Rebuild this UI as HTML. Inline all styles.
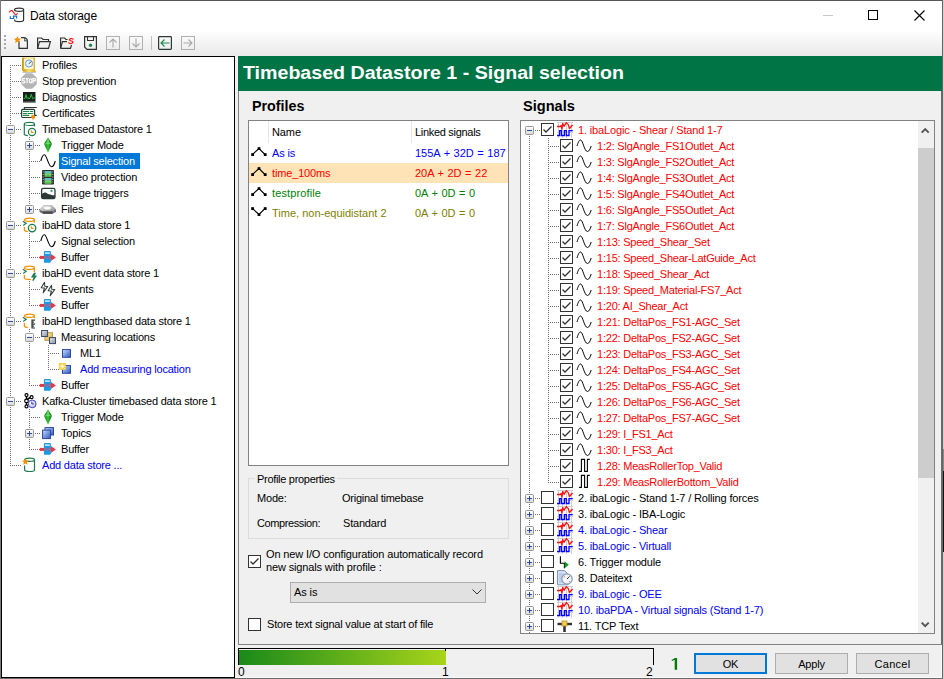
<!DOCTYPE html>
<html><head><meta charset="utf-8">
<style>
*{box-sizing:border-box;margin:0;padding:0}
html,body{width:944px;height:679px;overflow:hidden;background:#f0f0f0;font-family:"Liberation Sans",sans-serif;font-size:11px;color:#000;letter-spacing:-0.2px}
.a{position:absolute}
.t{position:absolute;white-space:nowrap;line-height:16px;height:16px}
svg{position:absolute;overflow:visible}
</style></head><body>
<svg width="0" height="0" style="position:absolute"><defs><linearGradient id="exg" x1="0" y1="0" x2="0" y2="1"><stop offset="0" stop-color="#ffffff"/><stop offset="1" stop-color="#d8d8d8"/></linearGradient></defs></svg>
<div class="a" style="left:0px;top:0px;width:944px;height:1px;background:#555"></div>
<div class="a" style="left:0px;top:0px;width:1px;height:679px;background:#7a7a7a"></div>
<div class="a" style="left:943px;top:0px;width:1px;height:679px;background:#d0d0d0"></div>
<div class="a" style="left:943px;top:449px;width:1px;height:22px;background:#888"></div>
<div class="a" style="left:943px;top:471px;width:1px;height:81px;background:#111"></div>
<div class="a" style="left:942px;top:0px;width:1px;height:679px;background:#666"></div>
<div class="a" style="left:0px;top:678px;width:942px;height:1px;background:#6a6a6a"></div>
<div class="a" style="left:236px;top:677px;width:706px;height:1px;background:#fafafa"></div>
<div class="a" style="left:941px;top:32px;width:1px;height:646px;background:#fafafa"></div>
<div class="a" style="left:1px;top:1px;width:941px;height:31px;background:#fff"></div>
<div class="t" style="left:30px;top:8px;color:#000;font-size:12px;letter-spacing:-0.15px;">Data storage</div>
<svg style="left:6px;top:5px" width="22" height="20" viewBox="0 0 22 20"><path d="M8.6 5.5 V4.8 C8.6 2.6,17.6 2.6,17.6 4.8 V15 C17.6 17.2,8.6 17.2,8.6 15 V14.6" fill="none" stroke="#333" stroke-width="1.2"/><path d="M8.6 4.8 C8.6 6.9,17.6 6.9,17.6 4.8" fill="none" stroke="#333" stroke-width="1.2"/><path d="M3.2 7.4 Q5.4 3.6,7.5 7.3 Q9.5 11.2,11.6 8.4" fill="none" stroke="#ff2020" stroke-width="1.2"/><path d="M4.3 11.2 V13.5 H7.6 V11.2 H10.6 V13.5" fill="none" stroke="#1a70d0" stroke-width="1.2"/></svg>
<div class="a" style="left:823px;top:15px;width:10px;height:1px;background:#c8c8c8"></div>
<svg style="left:868px;top:10px" width="10" height="10" viewBox="0 0 10 10"><rect x="0.5" y="0.5" width="9" height="9" fill="none" stroke="#000"/></svg>
<svg style="left:914px;top:10px" width="11" height="11" viewBox="0 0 11 11"><path d="M0.5 0.5L10.5 10.5M10.5 0.5L0.5 10.5" stroke="#000" stroke-width="1.1"/></svg>
<div class="a" style="left:1px;top:32px;width:941px;height:24px;background:linear-gradient(#fdfdfd,#e9e9e9)"></div>
<div class="a" style="left:4px;top:35px;width:2px;height:2px;background:#a8a8a8"></div>
<div class="a" style="left:4px;top:39px;width:2px;height:2px;background:#a8a8a8"></div>
<div class="a" style="left:4px;top:43px;width:2px;height:2px;background:#a8a8a8"></div>
<div class="a" style="left:4px;top:47px;width:2px;height:2px;background:#a8a8a8"></div>
<svg style="left:14px;top:36px" width="16" height="14" viewBox="0 0 16 14"><path d="M5 5 V12.4 H13.4 V5.5 C13.4 3,12 1.6,9.5 1.6 H7" fill="none" stroke="#333" stroke-width="1.2"/><path d="M9.8 1.6 C11 2.5,10.8 4.2,10.6 5 C11.5 4.6,13 4.8,13.4 5.5" fill="none" stroke="#333" stroke-width="1"/><path d="M3.4 0.2 L4.5 2.6 L7 2.8 L5.1 4.5 L5.7 7 L3.4 5.7 L1.1 7 L1.7 4.5 L-0.2 2.8 L2.3 2.6 Z" fill="#f39200"/></svg>
<svg style="left:37px;top:37px" width="14" height="12" viewBox="0 0 14 12"><path d="M0.6 11.4 V1 H4.5 L6 2.5 H11.5 V4.5" fill="none" stroke="#333" stroke-width="1.2"/><path d="M0.6 11.4 L2.5 4.6 H13.4 L11.5 11.4 Z" fill="none" stroke="#333" stroke-width="1.2"/></svg>
<svg style="left:60px;top:37px" width="14" height="12" viewBox="0 0 14 12"><path d="M0.6 11.4 V1 H4.5 L6 2.5 H7.5" fill="none" stroke="#333" stroke-width="1.2"/><path d="M0.6 11.4 L2.5 4.6 H7 M11.5 8 L10.5 11.4 H0.6" fill="none" stroke="#333" stroke-width="1.2"/><text x="8" y="7.3" font-family="Liberation Sans" font-weight="bold" font-style="italic" font-size="9" fill="#f00" letter-spacing="0">S</text></svg>
<svg style="left:84px;top:36px" width="13" height="14" viewBox="0 0 13 14"><path d="M0.6 0.6 H12.4 V13.4 H3 L0.6 11 Z" fill="none" stroke="#333" stroke-width="1.2"/><path d="M3.5 0.6 V4.5 H9.5 V0.6" fill="none" stroke="#333" stroke-width="1.1"/><circle cx="6.5" cy="9.2" r="1.7" fill="#1a8a4a"/></svg>
<svg style="left:106px;top:36px" width="14" height="14" viewBox="0 0 14 14"><rect x="0.5" y="0.5" width="13" height="13" fill="none" stroke="#b0b0b0"/><path d="M7 3 V11.5 M3.5 6.5 L7 3 L10.5 6.5" fill="none" stroke="#a8a8a8" stroke-width="1.1"/></svg>
<svg style="left:129px;top:36px" width="14" height="14" viewBox="0 0 14 14"><rect x="0.5" y="0.5" width="13" height="13" fill="none" stroke="#b0b0b0"/><path d="M7 2.5 V11 M3.5 7.5 L7 11 L10.5 7.5" fill="none" stroke="#a8a8a8" stroke-width="1.1"/></svg>
<div class="a" style="left:151px;top:36px;width:1px;height:14px;background:#c0c0c0"></div>
<svg style="left:158px;top:36px" width="14" height="14" viewBox="0 0 14 14"><rect x="0.6" y="0.6" width="12.8" height="12.8" rx="0.8" fill="none" stroke="#2b3a34" stroke-width="1.2"/><path d="M11.5 7 H3 M6.5 3.5 L3 7 L6.5 10.5" fill="none" stroke="#1a8a4a" stroke-width="1.15"/></svg>
<svg style="left:181px;top:36px" width="14" height="14" viewBox="0 0 14 14"><rect x="0.5" y="0.5" width="13" height="13" fill="none" stroke="#b0b0b0"/><path d="M2.5 7 H11 M7.5 3.5 L11 7 L7.5 10.5" fill="none" stroke="#a8a8a8" stroke-width="1.1"/></svg>
<div class="a" style="left:1px;top:56px;width:234px;height:622px;background:#fff;border:1px solid #000"></div>
<div class="a" style="left:10px;top:65px;width:1px;height:401px;background:repeating-linear-gradient(to bottom,#6e6e6e 0 1px,transparent 1px 2px)"></div>
<div class="a" style="left:29px;top:137px;width:1px;height:73px;background:repeating-linear-gradient(to bottom,#6e6e6e 0 1px,transparent 1px 2px)"></div>
<div class="a" style="left:29px;top:233px;width:1px;height:25px;background:repeating-linear-gradient(to bottom,#6e6e6e 0 1px,transparent 1px 2px)"></div>
<div class="a" style="left:29px;top:281px;width:1px;height:25px;background:repeating-linear-gradient(to bottom,#6e6e6e 0 1px,transparent 1px 2px)"></div>
<div class="a" style="left:29px;top:329px;width:1px;height:57px;background:repeating-linear-gradient(to bottom,#6e6e6e 0 1px,transparent 1px 2px)"></div>
<div class="a" style="left:48px;top:345px;width:1px;height:25px;background:repeating-linear-gradient(to bottom,#6e6e6e 0 1px,transparent 1px 2px)"></div>
<div class="a" style="left:29px;top:409px;width:1px;height:41px;background:repeating-linear-gradient(to bottom,#6e6e6e 0 1px,transparent 1px 2px)"></div>
<div class="a" style="left:10px;top:65px;width:11px;height:1px;background:repeating-linear-gradient(to right,#6e6e6e 0 1px,transparent 1px 2px)"></div>
<div class="a" style="left:10px;top:81px;width:11px;height:1px;background:repeating-linear-gradient(to right,#6e6e6e 0 1px,transparent 1px 2px)"></div>
<div class="a" style="left:10px;top:97px;width:11px;height:1px;background:repeating-linear-gradient(to right,#6e6e6e 0 1px,transparent 1px 2px)"></div>
<div class="a" style="left:10px;top:113px;width:11px;height:1px;background:repeating-linear-gradient(to right,#6e6e6e 0 1px,transparent 1px 2px)"></div>
<div class="a" style="left:10px;top:129px;width:11px;height:1px;background:repeating-linear-gradient(to right,#6e6e6e 0 1px,transparent 1px 2px)"></div>
<div class="a" style="left:29px;top:145px;width:11px;height:1px;background:repeating-linear-gradient(to right,#6e6e6e 0 1px,transparent 1px 2px)"></div>
<div class="a" style="left:29px;top:161px;width:11px;height:1px;background:repeating-linear-gradient(to right,#6e6e6e 0 1px,transparent 1px 2px)"></div>
<div class="a" style="left:29px;top:177px;width:11px;height:1px;background:repeating-linear-gradient(to right,#6e6e6e 0 1px,transparent 1px 2px)"></div>
<div class="a" style="left:29px;top:193px;width:11px;height:1px;background:repeating-linear-gradient(to right,#6e6e6e 0 1px,transparent 1px 2px)"></div>
<div class="a" style="left:29px;top:209px;width:11px;height:1px;background:repeating-linear-gradient(to right,#6e6e6e 0 1px,transparent 1px 2px)"></div>
<div class="a" style="left:10px;top:225px;width:11px;height:1px;background:repeating-linear-gradient(to right,#6e6e6e 0 1px,transparent 1px 2px)"></div>
<div class="a" style="left:29px;top:241px;width:11px;height:1px;background:repeating-linear-gradient(to right,#6e6e6e 0 1px,transparent 1px 2px)"></div>
<div class="a" style="left:29px;top:257px;width:11px;height:1px;background:repeating-linear-gradient(to right,#6e6e6e 0 1px,transparent 1px 2px)"></div>
<div class="a" style="left:10px;top:273px;width:11px;height:1px;background:repeating-linear-gradient(to right,#6e6e6e 0 1px,transparent 1px 2px)"></div>
<div class="a" style="left:29px;top:289px;width:11px;height:1px;background:repeating-linear-gradient(to right,#6e6e6e 0 1px,transparent 1px 2px)"></div>
<div class="a" style="left:29px;top:305px;width:11px;height:1px;background:repeating-linear-gradient(to right,#6e6e6e 0 1px,transparent 1px 2px)"></div>
<div class="a" style="left:10px;top:321px;width:11px;height:1px;background:repeating-linear-gradient(to right,#6e6e6e 0 1px,transparent 1px 2px)"></div>
<div class="a" style="left:29px;top:337px;width:11px;height:1px;background:repeating-linear-gradient(to right,#6e6e6e 0 1px,transparent 1px 2px)"></div>
<div class="a" style="left:48px;top:353px;width:11px;height:1px;background:repeating-linear-gradient(to right,#6e6e6e 0 1px,transparent 1px 2px)"></div>
<div class="a" style="left:48px;top:369px;width:11px;height:1px;background:repeating-linear-gradient(to right,#6e6e6e 0 1px,transparent 1px 2px)"></div>
<div class="a" style="left:29px;top:385px;width:11px;height:1px;background:repeating-linear-gradient(to right,#6e6e6e 0 1px,transparent 1px 2px)"></div>
<div class="a" style="left:10px;top:401px;width:11px;height:1px;background:repeating-linear-gradient(to right,#6e6e6e 0 1px,transparent 1px 2px)"></div>
<div class="a" style="left:29px;top:417px;width:11px;height:1px;background:repeating-linear-gradient(to right,#6e6e6e 0 1px,transparent 1px 2px)"></div>
<div class="a" style="left:29px;top:433px;width:11px;height:1px;background:repeating-linear-gradient(to right,#6e6e6e 0 1px,transparent 1px 2px)"></div>
<div class="a" style="left:29px;top:449px;width:11px;height:1px;background:repeating-linear-gradient(to right,#6e6e6e 0 1px,transparent 1px 2px)"></div>
<div class="a" style="left:10px;top:465px;width:11px;height:1px;background:repeating-linear-gradient(to right,#6e6e6e 0 1px,transparent 1px 2px)"></div>
<svg style="left:21px;top:57px" width="16" height="16" viewBox="0 0 16 16"><defs><linearGradient id="pg" x1="0" x2="1"><stop offset="0" stop-color="#c89a10"/><stop offset="0.5" stop-color="#f8e070"/><stop offset="1" stop-color="#d8a820"/></linearGradient></defs><path d="M1 0.5 H14 V13 L15 15 H2.5 L1 13 Z" fill="url(#pg)"/><rect x="3" y="1.5" width="9.5" height="10.5" fill="#fdf6d8"/><circle cx="8" cy="6.5" r="3.6" fill="#e6f2fc" stroke="#6f9ccc" stroke-width="1"/><path d="M8 6.8 L10.2 4.4" stroke="#2a3040" stroke-width="0.9"/><path d="M1.5 15.5 H15" stroke="#8a8a8a" stroke-width="1" opacity="0.5"/></svg>
<div class="t" style="left:42px;top:57px;color:#000;">Profiles</div>
<svg style="left:21px;top:73px" width="16" height="16" viewBox="0 0 16 16"><path d="M4.8 0.3 H11.2 L15.8 4.8 V11.2 L11.2 15.7 H4.8 L0.3 11.2 V4.8 Z" fill="#b5b5b5"/><g fill="none" stroke="#fff" stroke-width="1.15"><path d="M4 5.6 H2.2 Q1.3 5.6,1.3 6.6 Q1.3 7.6,2.6 7.7 Q4 7.8,4 8.8 Q4 9.9,3 9.9 H1.2"/><path d="M4.6 5.6 H7.6 M6.1 5.6 V10.2"/><ellipse cx="9.6" cy="7.8" rx="1.3" ry="2.1"/><path d="M11.9 10.2 V5.6 H13.6 Q14.7 5.6,14.7 6.7 Q14.7 7.9,13.6 7.9 H11.9"/></g></svg>
<div class="t" style="left:42px;top:73px;color:#000;">Stop prevention</div>
<svg style="left:21px;top:89px" width="16" height="16" viewBox="0 0 16 16"><rect x="2" y="3" width="12.5" height="10.5" fill="#15201a"/><rect x="2" y="12.5" width="13" height="1.5" fill="#8a8a8a" opacity="0.8"/><rect x="14" y="3.5" width="1" height="10" fill="#9a9a9a" opacity="0.8"/><path d="M2.5 9.5 H4 L5 5.5 L6 9.5 L7 8.5 L8 10 L9 9 L10.3 5 L11.5 9.8 L12.5 9 H14.5" fill="none" stroke="#28b838" stroke-width="1"/></svg>
<div class="t" style="left:42px;top:89px;color:#000;">Diagnostics</div>
<svg style="left:21px;top:105px" width="16" height="16" viewBox="0 0 16 16"><path d="M3.4 4.4 V2.5 H15.7 M13.6 10.4 H15.7" fill="none" stroke="#2b3a34" stroke-width="1.1"/><rect x="0.6" y="4.4" width="13" height="8.1" rx="1.2" fill="#fff" stroke="#2b3a34" stroke-width="1.2"/><path d="M2.3 6.5H7.8M9.3 6.5H11.9M2.3 8.5H5.9M7.3 8.5H11.9M2.3 10.4H7.8" stroke="#1a8a4a" stroke-width="1.1" stroke-linecap="round"/><circle cx="12" cy="11.8" r="2" fill="#f39200"/><path d="M11 12.5 L12 15.5 L13 12.5 Z" fill="#f39200"/></svg>
<div class="t" style="left:42px;top:105px;color:#000;">Certificates</div>
<svg style="left:6px;top:125px" width="9" height="9" viewBox="0 0 9 9"><rect x="0.5" y="0.5" width="8" height="8" rx="1" fill="url(#exg)" stroke="#979797"/><path d="M2 4.5H7" stroke="#2a4a9a" stroke-width="1"/></svg>
<svg style="left:21px;top:121px" width="16" height="16" viewBox="0 0 16 16"><ellipse cx="8.4" cy="2.9" rx="5.1" ry="1.6" fill="none" stroke="#1e7a4e" stroke-width="1.2"/><path d="M13.5 2.9 V5.6 M3.3 2.9 V13.3 C3.6 14.2,5 14.6,6.8 14.7" fill="none" stroke="#1e7a4e" stroke-width="1.2"/><circle cx="11" cy="11" r="3.6" fill="#fff" stroke="#1e7a4e" stroke-width="1.2"/><path d="M10.4 9.3 V11.4 H12.5" fill="none" stroke="#f39200" stroke-width="1.1"/></svg>
<div class="t" style="left:42px;top:121px;color:#000;">Timebased Datastore 1</div>
<svg style="left:25px;top:141px" width="9" height="9" viewBox="0 0 9 9"><rect x="0.5" y="0.5" width="8" height="8" rx="1" fill="url(#exg)" stroke="#979797"/><path d="M2 4.5H7" stroke="#2a4a9a" stroke-width="1"/><path d="M4.5 2V7" stroke="#2a4a9a" stroke-width="1"/></svg>
<svg style="left:40px;top:137px" width="16" height="16" viewBox="0 0 16 16"><defs><linearGradient id="dg" x1="0" x2="1"><stop offset="0" stop-color="#0a7a0a"/><stop offset="0.5" stop-color="#38c838"/><stop offset="1" stop-color="#005a00"/></linearGradient></defs><path d="M8 0.3 L12 6.8 L8 15.7 L4 6.8 Z" fill="url(#dg)"/><path d="M8 1 L10 6.8 L6 6.8 Z" fill="#7ee07e" opacity="0.6"/><path d="M4 6.8 L12 6.8" stroke="#b0f0b0" stroke-width="0.5"/></svg>
<div class="t" style="left:61px;top:137px;color:#000;">Trigger Mode</div>
<svg style="left:40px;top:153px" width="16" height="16" viewBox="0 0 16 16"><path d="M0.8 8 C1.8 4,3 1.8,4.4 1.8 C6.8 1.8,8.4 13.8,11.6 13.8 C13 13.8,14.3 11.5,15.3 8" fill="none" stroke="#000" stroke-width="1.1"/></svg>
<div class="a" style="left:58px;top:153px;width:0px;height:16px;"></div>
<div class="t" style="left:59px;top:153px;color:#fff;background:#0078d7;padding:0 5px 0 2px">Signal selection</div>
<svg style="left:40px;top:169px" width="16" height="16" viewBox="0 0 16 16"><defs><linearGradient id="fg" x1="0" y1="0" x2="0" y2="1"><stop offset="0" stop-color="#5ab8e0"/><stop offset="0.6" stop-color="#6ed060"/><stop offset="1" stop-color="#4aa040"/></linearGradient></defs><rect x="2" y="1" width="12" height="14.5" rx="0.8" fill="#2e2e2e"/><rect x="4.5" y="2" width="7" height="6" fill="url(#fg)"/><rect x="4.5" y="9" width="7" height="6" fill="url(#fg)"/><path d="M3.2 2.5V15M12.8 2.5V15" stroke="#d8d8d8" stroke-width="0.9" stroke-dasharray="1 1.5"/></svg>
<div class="t" style="left:61px;top:169px;color:#000;">Video protection</div>
<svg style="left:40px;top:185px" width="16" height="16" viewBox="0 0 16 16"><rect x="1.6" y="3.3" width="13.4" height="10.2" rx="1.6" fill="#fff" stroke="#2b3a34" stroke-width="1.3"/><path d="M1.5 10 C3 7.5,5 7,6.5 8 C8 9,10 9.5,11.5 10 C13 10.5,14 10,15 10.5 V13.5 H1.5 Z" fill="#2b3a34"/><rect x="10.5" y="4.8" width="2" height="2" fill="#2a9a6a"/></svg>
<div class="t" style="left:61px;top:185px;color:#000;">Image triggers</div>
<svg style="left:25px;top:205px" width="9" height="9" viewBox="0 0 9 9"><rect x="0.5" y="0.5" width="8" height="8" rx="1" fill="url(#exg)" stroke="#979797"/><path d="M2 4.5H7" stroke="#2a4a9a" stroke-width="1"/><path d="M4.5 2V7" stroke="#2a4a9a" stroke-width="1"/></svg>
<svg style="left:40px;top:201px" width="16" height="16" viewBox="0 0 16 16"><defs><linearGradient id="dk" x1="0" y1="0" x2="1" y2="1"><stop offset="0" stop-color="#f0f0f0"/><stop offset="1" stop-color="#8a8a8a"/></linearGradient></defs><path d="M-0.5 9 L3.5 4.5 H12 L16 8.5 V11 L12.5 12.8 H3 L-0.5 11 Z" fill="#6a6a6a"/><path d="M-0.5 9 L3.5 4.5 H12 L16 8.5 L12.5 10.3 H3 Z" fill="url(#dk)"/><ellipse cx="7.5" cy="7" rx="3.4" ry="1.5" fill="#fafafa"/><path d="M3 10.5 H12.5 V12.8 H3 Z" fill="#4a4a4a"/><circle cx="13.8" cy="10.6" r="0.9" fill="#8080e0"/></svg>
<div class="t" style="left:61px;top:201px;color:#000;">Files</div>
<svg style="left:6px;top:221px" width="9" height="9" viewBox="0 0 9 9"><rect x="0.5" y="0.5" width="8" height="8" rx="1" fill="url(#exg)" stroke="#979797"/><path d="M2 4.5H7" stroke="#2a4a9a" stroke-width="1"/></svg>
<svg style="left:21px;top:217px" width="16" height="16" viewBox="0 0 16 16"><ellipse cx="8.4" cy="2.8" rx="5" ry="1.6" fill="none" stroke="#f39200" stroke-width="1.3"/><path d="M1.9 4.3 L5.1 6.4 L2.2 8.6" fill="none" stroke="#1e7a4e" stroke-width="1.2"/><path d="M13.3 2.8 V5.8 M3.4 9.9 V13.3 C3.8 14.2,5 14.5,6.8 14.6" fill="none" stroke="#f39200" stroke-width="1.3"/><circle cx="11.1" cy="11.1" r="3.7" fill="#fff" stroke="#1e7a4e" stroke-width="1.3"/><path d="M10.4 9.2 V11.4 H12.5" fill="none" stroke="#f39200" stroke-width="1.1"/></svg>
<div class="t" style="left:42px;top:217px;color:#000;">ibaHD data store 1</div>
<svg style="left:40px;top:233px" width="16" height="16" viewBox="0 0 16 16"><path d="M0.8 8 C1.8 4,3 1.8,4.4 1.8 C6.8 1.8,8.4 13.8,11.6 13.8 C13 13.8,14.3 11.5,15.3 8" fill="none" stroke="#000" stroke-width="1.1"/></svg>
<div class="t" style="left:61px;top:233px;color:#000;">Signal selection</div>
<svg style="left:40px;top:249px" width="16" height="16" viewBox="0 0 16 16"><rect x="-0.2" y="6.9" width="12" height="3" fill="#ee3344"/><path d="M10.9 4.9 L15.9 8.4 L10.9 11.9 Z" fill="#ee3344"/><rect x="3.9" y="1.9" width="7" height="11.8" rx="1.3" fill="#1a98e0"/><rect x="5" y="3.4" width="4.8" height="1.4" fill="#e8f0f4"/><rect x="3.9" y="7.1" width="7" height="2.6" fill="#7878a8"/></svg>
<div class="t" style="left:61px;top:249px;color:#000;">Buffer</div>
<svg style="left:6px;top:269px" width="9" height="9" viewBox="0 0 9 9"><rect x="0.5" y="0.5" width="8" height="8" rx="1" fill="url(#exg)" stroke="#979797"/><path d="M2 4.5H7" stroke="#2a4a9a" stroke-width="1"/></svg>
<svg style="left:21px;top:265px" width="16" height="16" viewBox="0 0 16 16"><ellipse cx="8.4" cy="2.8" rx="5" ry="1.6" fill="none" stroke="#f39200" stroke-width="1.3"/><path d="M1.9 4.3 L5.1 6.4 L2.2 8.6" fill="none" stroke="#1e7a4e" stroke-width="1.2"/><path d="M13.3 2.8 V7.3 M3.4 9.9 V13.3 C3.8 14.2,5.5 14.6,10 14.6" fill="none" stroke="#f39200" stroke-width="1.3"/><path d="M13.3 8.3 L10.8 12 H13.5 L12 15.3 L15.2 11 H12.8 L14.2 8.3 Z" fill="#fff" stroke="#1e7a4e" stroke-width="1.2" stroke-linejoin="round"/></svg>
<div class="t" style="left:42px;top:265px;color:#000;">ibaHD event data store 1</div>
<svg style="left:40px;top:281px" width="16" height="16" viewBox="0 0 16 16"><path d="M4.5 1.2 L1.2 6.8 L4.4 7 L3.2 11.8 L7.8 5.4 L4.8 5.3 Z" fill="#fff" stroke="#2b3a34" stroke-width="1.05" stroke-linejoin="round"/><path d="M11.5 4.2 L8.2 9.8 L11.4 10 L10.2 14.8 L14.8 8.4 L11.8 8.3 Z" fill="#fff" stroke="#2b3a34" stroke-width="1.05" stroke-linejoin="round"/></svg>
<div class="t" style="left:61px;top:281px;color:#000;">Events</div>
<svg style="left:40px;top:297px" width="16" height="16" viewBox="0 0 16 16"><rect x="-0.2" y="6.9" width="12" height="3" fill="#ee3344"/><path d="M10.9 4.9 L15.9 8.4 L10.9 11.9 Z" fill="#ee3344"/><rect x="3.9" y="1.9" width="7" height="11.8" rx="1.3" fill="#1a98e0"/><rect x="5" y="3.4" width="4.8" height="1.4" fill="#e8f0f4"/><rect x="3.9" y="7.1" width="7" height="2.6" fill="#7878a8"/></svg>
<div class="t" style="left:61px;top:297px;color:#000;">Buffer</div>
<svg style="left:6px;top:317px" width="9" height="9" viewBox="0 0 9 9"><rect x="0.5" y="0.5" width="8" height="8" rx="1" fill="url(#exg)" stroke="#979797"/><path d="M2 4.5H7" stroke="#2a4a9a" stroke-width="1"/></svg>
<svg style="left:21px;top:313px" width="16" height="16" viewBox="0 0 16 16"><ellipse cx="8.4" cy="2.8" rx="5" ry="1.6" fill="none" stroke="#f39200" stroke-width="1.3"/><path d="M1.9 4.3 L5.1 6.4 L2.2 8.6" fill="none" stroke="#1e7a4e" stroke-width="1.2"/><path d="M13.3 2.8 V5 M3.4 9.9 V13.3 C3.8 14.2,5 14.5,6.8 14.6" fill="none" stroke="#f39200" stroke-width="1.3"/><path d="M11 6.5 V15.5 M11 7.2 H14 M11 9.2 H13 M11 11.2 H14 M11 13.2 H13 M11 15 H14" fill="none" stroke="#2b3a34" stroke-width="1.2"/></svg>
<div class="t" style="left:42px;top:313px;color:#000;">ibaHD lengthbased data store 1</div>
<svg style="left:25px;top:333px" width="9" height="9" viewBox="0 0 9 9"><rect x="0.5" y="0.5" width="8" height="8" rx="1" fill="url(#exg)" stroke="#979797"/><path d="M2 4.5H7" stroke="#2a4a9a" stroke-width="1"/></svg>
<svg style="left:40px;top:329px" width="16" height="16" viewBox="0 0 16 16"><defs><linearGradient id="gg" x1="0" y1="0" x2="1" y2="1"><stop offset="0" stop-color="#e8eaf0"/><stop offset="1" stop-color="#8a909c"/></linearGradient><linearGradient id="yg" x1="0" y1="0" x2="1" y2="1"><stop offset="0" stop-color="#fff0b0"/><stop offset="1" stop-color="#e0a830"/></linearGradient></defs><rect x="4.9" y="3.7" width="7.5" height="7.6" fill="url(#yg)" stroke="#b89040" stroke-width="0.9"/><rect x="1.6" y="1.5" width="6" height="6" fill="url(#gg)" stroke="#3a4a6a" stroke-width="1"/><rect x="9.5" y="8.6" width="6" height="6" fill="url(#gg)" stroke="#3a4a6a" stroke-width="1"/></svg>
<div class="t" style="left:61px;top:329px;color:#000;">Measuring locations</div>
<svg style="left:59px;top:345px" width="16" height="16" viewBox="0 0 16 16"><defs><linearGradient id="mg" x1="0" y1="0" x2="1" y2="1"><stop offset="0" stop-color="#d0e0fc"/><stop offset="1" stop-color="#2a58c0"/></linearGradient></defs><rect x="3.5" y="4.6" width="8" height="7.7" fill="url(#mg)" stroke="#2a48a0" stroke-width="1"/></svg>
<div class="t" style="left:80px;top:345px;color:#000;">ML1</div>
<svg style="left:59px;top:361px" width="16" height="16" viewBox="0 0 16 16"><rect x="3.5" y="4.6" width="8" height="7.7" fill="url(#mg)" stroke="#2a48a0" stroke-width="1"/><rect x="-0.2" y="2" width="7" height="6.7" fill="#f6c838"/><path d="M0.5 2.7 L6 8 M6 2.7 L0.5 8 M3.3 2 V8.7 M-0.2 5.3 H6.8" stroke="#fff4b0" stroke-width="0.8"/><circle cx="3.3" cy="5.3" r="1.2" fill="#fffbe0"/></svg>
<div class="t" style="left:80px;top:361px;color:#0000ff;">Add measuring location</div>
<svg style="left:40px;top:377px" width="16" height="16" viewBox="0 0 16 16"><rect x="-0.2" y="6.9" width="12" height="3" fill="#ee3344"/><path d="M10.9 4.9 L15.9 8.4 L10.9 11.9 Z" fill="#ee3344"/><rect x="3.9" y="1.9" width="7" height="11.8" rx="1.3" fill="#1a98e0"/><rect x="5" y="3.4" width="4.8" height="1.4" fill="#e8f0f4"/><rect x="3.9" y="7.1" width="7" height="2.6" fill="#7878a8"/></svg>
<div class="t" style="left:61px;top:377px;color:#000;">Buffer</div>
<svg style="left:6px;top:397px" width="9" height="9" viewBox="0 0 9 9"><rect x="0.5" y="0.5" width="8" height="8" rx="1" fill="url(#exg)" stroke="#979797"/><path d="M2 4.5H7" stroke="#2a4a9a" stroke-width="1"/></svg>
<svg style="left:21px;top:393px" width="16" height="16" viewBox="0 0 16 16"><defs><radialGradient id="kg" cx="0.35" cy="0.35" r="0.8"><stop offset="0" stop-color="#ffffff"/><stop offset="1" stop-color="#aab0e8"/></radialGradient></defs><path d="M5.5 2.1 V13.4 M5.5 7.9 C6.5 6,8 4.5,10.6 4.2" fill="none" stroke="#000" stroke-width="1.4"/><circle cx="5.5" cy="2.1" r="1.5" fill="#fff" stroke="#000" stroke-width="1.2"/><circle cx="5.5" cy="7.9" r="1.8" fill="#fff" stroke="#000" stroke-width="1.2"/><circle cx="5.5" cy="13.4" r="1.5" fill="#fff" stroke="#000" stroke-width="1.2"/><circle cx="10.6" cy="4.2" r="1.5" fill="#fff" stroke="#000" stroke-width="1.2"/><circle cx="11.2" cy="10.9" r="3.9" fill="url(#kg)" stroke="#4848b8" stroke-width="1"/><path d="M10.8 8.6 V10.9 H12.8" fill="none" stroke="#303090" stroke-width="1"/></svg>
<div class="t" style="left:42px;top:393px;color:#000;">Kafka-Cluster timebased data store 1</div>
<svg style="left:40px;top:409px" width="16" height="16" viewBox="0 0 16 16"><defs><linearGradient id="dg" x1="0" x2="1"><stop offset="0" stop-color="#0a7a0a"/><stop offset="0.5" stop-color="#38c838"/><stop offset="1" stop-color="#005a00"/></linearGradient></defs><path d="M8 0.3 L12 6.8 L8 15.7 L4 6.8 Z" fill="url(#dg)"/><path d="M8 1 L10 6.8 L6 6.8 Z" fill="#7ee07e" opacity="0.6"/><path d="M4 6.8 L12 6.8" stroke="#b0f0b0" stroke-width="0.5"/></svg>
<div class="t" style="left:61px;top:409px;color:#000;">Trigger Mode</div>
<svg style="left:25px;top:429px" width="9" height="9" viewBox="0 0 9 9"><rect x="0.5" y="0.5" width="8" height="8" rx="1" fill="url(#exg)" stroke="#979797"/><path d="M2 4.5H7" stroke="#2a4a9a" stroke-width="1"/><path d="M4.5 2V7" stroke="#2a4a9a" stroke-width="1"/></svg>
<svg style="left:40px;top:425px" width="16" height="16" viewBox="0 0 16 16"><defs><linearGradient id="tg" x1="0" y1="0" x2="1" y2="1"><stop offset="0" stop-color="#c8dcfc"/><stop offset="1" stop-color="#2a58c0"/></linearGradient></defs><rect x="5" y="2.6" width="8.5" height="7.4" fill="url(#tg)" stroke="#2a48a0" stroke-width="1"/><rect x="2.6" y="5.1" width="7.8" height="8.5" fill="url(#tg)" stroke="#2a48a0" stroke-width="1"/></svg>
<div class="t" style="left:61px;top:425px;color:#000;">Topics</div>
<svg style="left:40px;top:441px" width="16" height="16" viewBox="0 0 16 16"><rect x="-0.2" y="6.9" width="12" height="3" fill="#ee3344"/><path d="M10.9 4.9 L15.9 8.4 L10.9 11.9 Z" fill="#ee3344"/><rect x="3.9" y="1.9" width="7" height="11.8" rx="1.3" fill="#1a98e0"/><rect x="5" y="3.4" width="4.8" height="1.4" fill="#e8f0f4"/><rect x="3.9" y="7.1" width="7" height="2.6" fill="#7878a8"/></svg>
<div class="t" style="left:61px;top:441px;color:#000;">Buffer</div>
<svg style="left:21px;top:457px" width="16" height="16" viewBox="0 0 16 16"><ellipse cx="8.6" cy="2.7" rx="4.9" ry="1.6" fill="none" stroke="#1e7a4e" stroke-width="1.2"/><path d="M13.5 2.7 V13 C13.5 15,3.6 15,3.6 13 V8.5" fill="none" stroke="#1e7a4e" stroke-width="1.2"/><path d="M4.40 1.10 L5.34 3.51 L7.92 3.66 L5.92 5.29 L6.57 7.79 L4.40 6.40 L2.23 7.79 L2.88 5.29 L0.88 3.66 L3.46 3.51 Z" fill="#f39200"/></svg>
<div class="t" style="left:42px;top:457px;color:#0000ff;">Add data store ...</div>
<div class="a" style="left:238px;top:56px;width:704px;height:35px;background:#007445"></div>
<div class="t" style="left:243px;top:62px;height:22px;line-height:22px;font-size:18px;font-weight:bold;color:#fff;letter-spacing:0;transform:scaleX(1.089);transform-origin:0 0">Timebased Datastore 1 - Signal selection</div>
<div class="a" style="left:238px;top:91px;width:704px;height:554px;border-left:1px solid #828282;border-bottom:1px solid #828282;border-right:1px solid #6a6a6a"></div>
<div class="t" style="left:252px;top:97px;color:#000;font-size:14.3px;letter-spacing:0px;font-weight:bold;height:18px;line-height:18px;">Profiles</div>
<div class="t" style="left:523px;top:97px;color:#000;font-size:14.6px;letter-spacing:0px;font-weight:bold;height:18px;line-height:18px;">Signals</div>
<div class="a" style="left:248px;top:120px;width:261px;height:346px;background:#fff;border:1px solid #828282"></div>
<div class="a" style="left:268px;top:121px;width:1px;height:22px;background:#e5e5e5"></div>
<div class="a" style="left:411px;top:121px;width:1px;height:22px;background:#e5e5e5"></div>
<div class="t" style="left:272px;top:124px;color:#000;letter-spacing:-0.1px;">Name</div>
<div class="t" style="left:415px;top:124px;color:#000;letter-spacing:-0.3px;">Linked signals</div>
<svg style="left:251px;top:147px" width="16" height="10" viewBox="0 0 16 10"><path d="M1.5 7.5 L8 1.5 L14 7.5" fill="none" stroke="#000" stroke-width="1.1"/><rect x="0.2" y="6.2" width="2.8" height="2.8" fill="#000"/><rect x="6.6" y="0.2" width="2.8" height="2.8" fill="#000"/><rect x="12.8" y="6.2" width="2.8" height="2.8" fill="#000"/></svg>
<div class="t" style="left:272px;top:145px;color:#0000ff;letter-spacing:-0.15px;">As is</div>
<div class="t" style="left:415px;top:145px;color:#0000ff;letter-spacing:0px;word-spacing:0.5px;">155A + 32D = 187</div>
<div class="a" style="left:249px;top:163px;width:259px;height:20px;background:#fde3b5"></div>
<svg style="left:251px;top:167px" width="16" height="10" viewBox="0 0 16 10"><path d="M1.5 7.5 L8 1.5 L14 7.5" fill="none" stroke="#000" stroke-width="1.1"/><rect x="0.2" y="6.2" width="2.8" height="2.8" fill="#000"/><rect x="6.6" y="0.2" width="2.8" height="2.8" fill="#000"/><rect x="12.8" y="6.2" width="2.8" height="2.8" fill="#000"/></svg>
<div class="t" style="left:272px;top:165px;color:#ff0000;letter-spacing:-0.15px;">time_100ms</div>
<div class="t" style="left:415px;top:165px;color:#ff0000;letter-spacing:0px;word-spacing:0.5px;">20A + 2D = 22</div>
<svg style="left:251px;top:187px" width="16" height="10" viewBox="0 0 16 10"><path d="M1.5 7.5 L8 1.5 L14 7.5" fill="none" stroke="#000" stroke-width="1.1"/><rect x="0.2" y="6.2" width="2.8" height="2.8" fill="#000"/><rect x="6.6" y="0.2" width="2.8" height="2.8" fill="#000"/><rect x="12.8" y="6.2" width="2.8" height="2.8" fill="#000"/></svg>
<div class="t" style="left:272px;top:185px;color:#008000;letter-spacing:0.12px;">testprofile</div>
<div class="t" style="left:415px;top:185px;color:#008000;letter-spacing:0px;word-spacing:0.5px;">0A + 0D = 0</div>
<svg style="left:251px;top:207px" width="16" height="10" viewBox="0 0 16 10"><path d="M1.5 1.5 L8 7.5 L14 1.5" fill="none" stroke="#000" stroke-width="1.1"/><rect x="0.2" y="0.2" width="2.8" height="2.8" fill="#000"/><rect x="6.6" y="6.2" width="2.8" height="2.8" fill="#000"/><rect x="12.8" y="0.2" width="2.8" height="2.8" fill="#000"/></svg>
<div class="t" style="left:272px;top:205px;color:#808000;letter-spacing:0.0px;">Time, non-equidistant 2</div>
<div class="t" style="left:415px;top:205px;color:#808000;letter-spacing:0px;word-spacing:0.5px;">0A + 0D = 0</div>
<div class="a" style="left:248px;top:478px;width:261px;height:61px;border:1px solid #dcdcdc"></div>
<div class="t" style="left:255px;top:471px;padding:0 2px;background:#f0f0f0;letter-spacing:-0.3px">Profile properties</div>
<div class="t" style="left:257px;top:490px;color:#000;">Mode:</div>
<div class="t" style="left:342px;top:490px;color:#000;letter-spacing:-0.25px;">Original timebase</div>
<div class="t" style="left:257px;top:515px;color:#000;letter-spacing:-0.4px;">Compression:</div>
<div class="t" style="left:343px;top:515px;color:#000;">Standard</div>
<svg style="left:248px;top:555px" width="13" height="13" viewBox="0 0 13 13"><rect x="0.5" y="0.5" width="12" height="12" fill="#fff" stroke="#333"/><path d="M2.5 6.5 L5 9 L10.5 3.5" fill="none" stroke="#333" stroke-width="1.3"/></svg>
<div class="a" style="left:266px;top:548px;line-height:13px;white-space:nowrap;letter-spacing:-0.14px">On new I/O configuration automatically record<br>new signals with profile :</div>
<div class="a" style="left:290px;top:582px;width:196px;height:21px;background:#e1e1e1;border:1px solid #adadad"></div>
<div class="t" style="left:294px;top:584px;color:#000;letter-spacing:-0.1px;">As is</div>
<svg style="left:472px;top:589px" width="10" height="6" viewBox="0 0 10 6"><path d="M0.5 0.5 L5 5 L9.5 0.5" fill="none" stroke="#333" stroke-width="1"/></svg>
<svg style="left:248px;top:618px" width="13" height="13" viewBox="0 0 13 13"><rect x="0.5" y="0.5" width="12" height="12" fill="#fff" stroke="#333"/></svg>
<div class="t" style="left:267px;top:616px;color:#000;letter-spacing:-0.2px;">Store text signal value at start of file</div>
<div class="a" style="left:520px;top:120px;width:415px;height:514px;background:#fff;border:1px solid #828282"></div>
<div class="a" style="left:918px;top:121px;width:16px;height:512px;background:#f0f0f0"></div>
<div class="a" style="left:918px;top:148px;width:16px;height:330px;background:#cdcdcd"></div>
<svg style="left:920px;top:127px" width="10" height="7" viewBox="0 0 10 7"><path d="M1.7 5.6 L5.2 2 L8.7 5.6" fill="none" stroke="#555" stroke-width="1.9"/></svg>
<svg style="left:920px;top:621px" width="10" height="7" viewBox="0 0 10 7"><path d="M1.7 1.6 L5.2 5.2 L8.7 1.6" fill="none" stroke="#555" stroke-width="1.9"/></svg>
<div class="a" style="left:0;top:0;width:944px;height:679px;clip-path:inset(121px 26px 46px 521px)">
<div class="a" style="left:529px;top:130px;width:1px;height:510px;background:repeating-linear-gradient(to bottom,#6e6e6e 0 1px,transparent 1px 2px)"></div>
<div class="a" style="left:548px;top:138px;width:1px;height:345px;background:repeating-linear-gradient(to bottom,#6e6e6e 0 1px,transparent 1px 2px)"></div>
<div class="a" style="left:529px;top:130px;width:11px;height:1px;background:repeating-linear-gradient(to right,#6e6e6e 0 1px,transparent 1px 2px)"></div>
<svg style="left:525px;top:126px" width="9" height="9" viewBox="0 0 9 9"><rect x="0.5" y="0.5" width="8" height="8" rx="1" fill="url(#exg)" stroke="#979797"/><path d="M2 4.5H7" stroke="#2a4a9a" stroke-width="1"/></svg>
<svg style="left:541px;top:123px" width="13" height="13" viewBox="0 0 13 13"><rect x="0.5" y="0.5" width="12" height="12" fill="#fff" stroke="#333"/><path d="M2.5 6.5 L5 9 L10.5 3.5" fill="none" stroke="#333" stroke-width="1.3"/></svg>
<svg style="left:557px;top:122px" width="16" height="16" viewBox="0 0 16 16"><g stroke="#cfcfcf" stroke-width="1"><path d="M0 0.5H16M1.5 0V16M5.5 0V16M9.5 0V16M14.5 0V16M0 10.5H16"/></g><path d="M0 4.5 H3.3 L4.1 3.3 L4.9 7 L5.8 1.5 L7 4.3 L9.3 0.6 L11.3 2.6 L12.4 6.5 L15.6 3" fill="none" stroke="#ff1010" stroke-width="1.3" stroke-linejoin="round"/><path d="M0 13.5 H2.6 V8.6 H4.4 V13.5 H7.4 V8.6 H9.3 V13.5 H12 V8.6 H15.8" fill="none" stroke="#0000ff" stroke-width="1.3"/></svg>
<div class="t" style="left:578px;top:122px;color:#ff0000;letter-spacing:-0.15px;">1. ibaLogic - Shear / Stand 1-7</div>
<div class="a" style="left:548px;top:146px;width:11px;height:1px;background:repeating-linear-gradient(to right,#6e6e6e 0 1px,transparent 1px 2px)"></div>
<svg style="left:560px;top:139px" width="13" height="13" viewBox="0 0 13 13"><rect x="0.5" y="0.5" width="12" height="12" fill="#fff" stroke="#333"/><path d="M2.5 6.5 L5 9 L10.5 3.5" fill="none" stroke="#333" stroke-width="1.3"/></svg>
<svg style="left:576px;top:138px" width="16" height="16" viewBox="0 0 16 16"><path d="M1 8 C2.2 4,3.3 2,4.6 2 C6.8 2,8.3 13.5,11.5 13.5 C13 13.5,14.2 11,15.2 8" fill="none" stroke="#000" stroke-width="1.0"/></svg>
<div class="t" style="left:597px;top:138px;color:#ff0000;letter-spacing:-0.22px;">1:2: SlgAngle_FS1Outlet_Act</div>
<div class="a" style="left:548px;top:162px;width:11px;height:1px;background:repeating-linear-gradient(to right,#6e6e6e 0 1px,transparent 1px 2px)"></div>
<svg style="left:560px;top:155px" width="13" height="13" viewBox="0 0 13 13"><rect x="0.5" y="0.5" width="12" height="12" fill="#fff" stroke="#333"/><path d="M2.5 6.5 L5 9 L10.5 3.5" fill="none" stroke="#333" stroke-width="1.3"/></svg>
<svg style="left:576px;top:154px" width="16" height="16" viewBox="0 0 16 16"><path d="M1 8 C2.2 4,3.3 2,4.6 2 C6.8 2,8.3 13.5,11.5 13.5 C13 13.5,14.2 11,15.2 8" fill="none" stroke="#000" stroke-width="1.0"/></svg>
<div class="t" style="left:597px;top:154px;color:#ff0000;letter-spacing:-0.22px;">1:3: SlgAngle_FS2Outlet_Act</div>
<div class="a" style="left:548px;top:178px;width:11px;height:1px;background:repeating-linear-gradient(to right,#6e6e6e 0 1px,transparent 1px 2px)"></div>
<svg style="left:560px;top:171px" width="13" height="13" viewBox="0 0 13 13"><rect x="0.5" y="0.5" width="12" height="12" fill="#fff" stroke="#333"/><path d="M2.5 6.5 L5 9 L10.5 3.5" fill="none" stroke="#333" stroke-width="1.3"/></svg>
<svg style="left:576px;top:170px" width="16" height="16" viewBox="0 0 16 16"><path d="M1 8 C2.2 4,3.3 2,4.6 2 C6.8 2,8.3 13.5,11.5 13.5 C13 13.5,14.2 11,15.2 8" fill="none" stroke="#000" stroke-width="1.0"/></svg>
<div class="t" style="left:597px;top:170px;color:#ff0000;letter-spacing:-0.22px;">1:4: SlgAngle_FS3Outlet_Act</div>
<div class="a" style="left:548px;top:194px;width:11px;height:1px;background:repeating-linear-gradient(to right,#6e6e6e 0 1px,transparent 1px 2px)"></div>
<svg style="left:560px;top:187px" width="13" height="13" viewBox="0 0 13 13"><rect x="0.5" y="0.5" width="12" height="12" fill="#fff" stroke="#333"/><path d="M2.5 6.5 L5 9 L10.5 3.5" fill="none" stroke="#333" stroke-width="1.3"/></svg>
<svg style="left:576px;top:186px" width="16" height="16" viewBox="0 0 16 16"><path d="M1 8 C2.2 4,3.3 2,4.6 2 C6.8 2,8.3 13.5,11.5 13.5 C13 13.5,14.2 11,15.2 8" fill="none" stroke="#000" stroke-width="1.0"/></svg>
<div class="t" style="left:597px;top:186px;color:#ff0000;letter-spacing:-0.22px;">1:5: SlgAngle_FS4Outlet_Act</div>
<div class="a" style="left:548px;top:210px;width:11px;height:1px;background:repeating-linear-gradient(to right,#6e6e6e 0 1px,transparent 1px 2px)"></div>
<svg style="left:560px;top:203px" width="13" height="13" viewBox="0 0 13 13"><rect x="0.5" y="0.5" width="12" height="12" fill="#fff" stroke="#333"/><path d="M2.5 6.5 L5 9 L10.5 3.5" fill="none" stroke="#333" stroke-width="1.3"/></svg>
<svg style="left:576px;top:202px" width="16" height="16" viewBox="0 0 16 16"><path d="M1 8 C2.2 4,3.3 2,4.6 2 C6.8 2,8.3 13.5,11.5 13.5 C13 13.5,14.2 11,15.2 8" fill="none" stroke="#000" stroke-width="1.0"/></svg>
<div class="t" style="left:597px;top:202px;color:#ff0000;letter-spacing:-0.22px;">1:6: SlgAngle_FS5Outlet_Act</div>
<div class="a" style="left:548px;top:226px;width:11px;height:1px;background:repeating-linear-gradient(to right,#6e6e6e 0 1px,transparent 1px 2px)"></div>
<svg style="left:560px;top:219px" width="13" height="13" viewBox="0 0 13 13"><rect x="0.5" y="0.5" width="12" height="12" fill="#fff" stroke="#333"/><path d="M2.5 6.5 L5 9 L10.5 3.5" fill="none" stroke="#333" stroke-width="1.3"/></svg>
<svg style="left:576px;top:218px" width="16" height="16" viewBox="0 0 16 16"><path d="M1 8 C2.2 4,3.3 2,4.6 2 C6.8 2,8.3 13.5,11.5 13.5 C13 13.5,14.2 11,15.2 8" fill="none" stroke="#000" stroke-width="1.0"/></svg>
<div class="t" style="left:597px;top:218px;color:#ff0000;letter-spacing:-0.22px;">1:7: SlgAngle_FS6Outlet_Act</div>
<div class="a" style="left:548px;top:242px;width:11px;height:1px;background:repeating-linear-gradient(to right,#6e6e6e 0 1px,transparent 1px 2px)"></div>
<svg style="left:560px;top:235px" width="13" height="13" viewBox="0 0 13 13"><rect x="0.5" y="0.5" width="12" height="12" fill="#fff" stroke="#333"/><path d="M2.5 6.5 L5 9 L10.5 3.5" fill="none" stroke="#333" stroke-width="1.3"/></svg>
<svg style="left:576px;top:234px" width="16" height="16" viewBox="0 0 16 16"><path d="M1 8 C2.2 4,3.3 2,4.6 2 C6.8 2,8.3 13.5,11.5 13.5 C13 13.5,14.2 11,15.2 8" fill="none" stroke="#000" stroke-width="1.0"/></svg>
<div class="t" style="left:597px;top:234px;color:#ff0000;letter-spacing:-0.22px;">1:13: Speed_Shear_Set</div>
<div class="a" style="left:548px;top:258px;width:11px;height:1px;background:repeating-linear-gradient(to right,#6e6e6e 0 1px,transparent 1px 2px)"></div>
<svg style="left:560px;top:251px" width="13" height="13" viewBox="0 0 13 13"><rect x="0.5" y="0.5" width="12" height="12" fill="#fff" stroke="#333"/><path d="M2.5 6.5 L5 9 L10.5 3.5" fill="none" stroke="#333" stroke-width="1.3"/></svg>
<svg style="left:576px;top:250px" width="16" height="16" viewBox="0 0 16 16"><path d="M1 8 C2.2 4,3.3 2,4.6 2 C6.8 2,8.3 13.5,11.5 13.5 C13 13.5,14.2 11,15.2 8" fill="none" stroke="#000" stroke-width="1.0"/></svg>
<div class="t" style="left:597px;top:250px;color:#ff0000;letter-spacing:-0.22px;">1:15: Speed_Shear-LatGuide_Act</div>
<div class="a" style="left:548px;top:274px;width:11px;height:1px;background:repeating-linear-gradient(to right,#6e6e6e 0 1px,transparent 1px 2px)"></div>
<svg style="left:560px;top:267px" width="13" height="13" viewBox="0 0 13 13"><rect x="0.5" y="0.5" width="12" height="12" fill="#fff" stroke="#333"/><path d="M2.5 6.5 L5 9 L10.5 3.5" fill="none" stroke="#333" stroke-width="1.3"/></svg>
<svg style="left:576px;top:266px" width="16" height="16" viewBox="0 0 16 16"><path d="M1 8 C2.2 4,3.3 2,4.6 2 C6.8 2,8.3 13.5,11.5 13.5 C13 13.5,14.2 11,15.2 8" fill="none" stroke="#000" stroke-width="1.0"/></svg>
<div class="t" style="left:597px;top:266px;color:#ff0000;letter-spacing:-0.22px;">1:18: Speed_Shear_Act</div>
<div class="a" style="left:548px;top:290px;width:11px;height:1px;background:repeating-linear-gradient(to right,#6e6e6e 0 1px,transparent 1px 2px)"></div>
<svg style="left:560px;top:283px" width="13" height="13" viewBox="0 0 13 13"><rect x="0.5" y="0.5" width="12" height="12" fill="#fff" stroke="#333"/><path d="M2.5 6.5 L5 9 L10.5 3.5" fill="none" stroke="#333" stroke-width="1.3"/></svg>
<svg style="left:576px;top:282px" width="16" height="16" viewBox="0 0 16 16"><path d="M1 8 C2.2 4,3.3 2,4.6 2 C6.8 2,8.3 13.5,11.5 13.5 C13 13.5,14.2 11,15.2 8" fill="none" stroke="#000" stroke-width="1.0"/></svg>
<div class="t" style="left:597px;top:282px;color:#ff0000;letter-spacing:-0.22px;">1:19: Speed_Material-FS7_Act</div>
<div class="a" style="left:548px;top:306px;width:11px;height:1px;background:repeating-linear-gradient(to right,#6e6e6e 0 1px,transparent 1px 2px)"></div>
<svg style="left:560px;top:299px" width="13" height="13" viewBox="0 0 13 13"><rect x="0.5" y="0.5" width="12" height="12" fill="#fff" stroke="#333"/><path d="M2.5 6.5 L5 9 L10.5 3.5" fill="none" stroke="#333" stroke-width="1.3"/></svg>
<svg style="left:576px;top:298px" width="16" height="16" viewBox="0 0 16 16"><path d="M1 8 C2.2 4,3.3 2,4.6 2 C6.8 2,8.3 13.5,11.5 13.5 C13 13.5,14.2 11,15.2 8" fill="none" stroke="#000" stroke-width="1.0"/></svg>
<div class="t" style="left:597px;top:298px;color:#ff0000;letter-spacing:-0.22px;">1:20: AI_Shear_Act</div>
<div class="a" style="left:548px;top:322px;width:11px;height:1px;background:repeating-linear-gradient(to right,#6e6e6e 0 1px,transparent 1px 2px)"></div>
<svg style="left:560px;top:315px" width="13" height="13" viewBox="0 0 13 13"><rect x="0.5" y="0.5" width="12" height="12" fill="#fff" stroke="#333"/><path d="M2.5 6.5 L5 9 L10.5 3.5" fill="none" stroke="#333" stroke-width="1.3"/></svg>
<svg style="left:576px;top:314px" width="16" height="16" viewBox="0 0 16 16"><path d="M1 8 C2.2 4,3.3 2,4.6 2 C6.8 2,8.3 13.5,11.5 13.5 C13 13.5,14.2 11,15.2 8" fill="none" stroke="#000" stroke-width="1.0"/></svg>
<div class="t" style="left:597px;top:314px;color:#ff0000;letter-spacing:-0.22px;">1:21: DeltaPos_FS1-AGC_Set</div>
<div class="a" style="left:548px;top:338px;width:11px;height:1px;background:repeating-linear-gradient(to right,#6e6e6e 0 1px,transparent 1px 2px)"></div>
<svg style="left:560px;top:331px" width="13" height="13" viewBox="0 0 13 13"><rect x="0.5" y="0.5" width="12" height="12" fill="#fff" stroke="#333"/><path d="M2.5 6.5 L5 9 L10.5 3.5" fill="none" stroke="#333" stroke-width="1.3"/></svg>
<svg style="left:576px;top:330px" width="16" height="16" viewBox="0 0 16 16"><path d="M1 8 C2.2 4,3.3 2,4.6 2 C6.8 2,8.3 13.5,11.5 13.5 C13 13.5,14.2 11,15.2 8" fill="none" stroke="#000" stroke-width="1.0"/></svg>
<div class="t" style="left:597px;top:330px;color:#ff0000;letter-spacing:-0.22px;">1:22: DeltaPos_FS2-AGC_Set</div>
<div class="a" style="left:548px;top:354px;width:11px;height:1px;background:repeating-linear-gradient(to right,#6e6e6e 0 1px,transparent 1px 2px)"></div>
<svg style="left:560px;top:347px" width="13" height="13" viewBox="0 0 13 13"><rect x="0.5" y="0.5" width="12" height="12" fill="#fff" stroke="#333"/><path d="M2.5 6.5 L5 9 L10.5 3.5" fill="none" stroke="#333" stroke-width="1.3"/></svg>
<svg style="left:576px;top:346px" width="16" height="16" viewBox="0 0 16 16"><path d="M1 8 C2.2 4,3.3 2,4.6 2 C6.8 2,8.3 13.5,11.5 13.5 C13 13.5,14.2 11,15.2 8" fill="none" stroke="#000" stroke-width="1.0"/></svg>
<div class="t" style="left:597px;top:346px;color:#ff0000;letter-spacing:-0.22px;">1:23: DeltaPos_FS3-AGC_Set</div>
<div class="a" style="left:548px;top:370px;width:11px;height:1px;background:repeating-linear-gradient(to right,#6e6e6e 0 1px,transparent 1px 2px)"></div>
<svg style="left:560px;top:363px" width="13" height="13" viewBox="0 0 13 13"><rect x="0.5" y="0.5" width="12" height="12" fill="#fff" stroke="#333"/><path d="M2.5 6.5 L5 9 L10.5 3.5" fill="none" stroke="#333" stroke-width="1.3"/></svg>
<svg style="left:576px;top:362px" width="16" height="16" viewBox="0 0 16 16"><path d="M1 8 C2.2 4,3.3 2,4.6 2 C6.8 2,8.3 13.5,11.5 13.5 C13 13.5,14.2 11,15.2 8" fill="none" stroke="#000" stroke-width="1.0"/></svg>
<div class="t" style="left:597px;top:362px;color:#ff0000;letter-spacing:-0.22px;">1:24: DeltaPos_FS4-AGC_Set</div>
<div class="a" style="left:548px;top:386px;width:11px;height:1px;background:repeating-linear-gradient(to right,#6e6e6e 0 1px,transparent 1px 2px)"></div>
<svg style="left:560px;top:379px" width="13" height="13" viewBox="0 0 13 13"><rect x="0.5" y="0.5" width="12" height="12" fill="#fff" stroke="#333"/><path d="M2.5 6.5 L5 9 L10.5 3.5" fill="none" stroke="#333" stroke-width="1.3"/></svg>
<svg style="left:576px;top:378px" width="16" height="16" viewBox="0 0 16 16"><path d="M1 8 C2.2 4,3.3 2,4.6 2 C6.8 2,8.3 13.5,11.5 13.5 C13 13.5,14.2 11,15.2 8" fill="none" stroke="#000" stroke-width="1.0"/></svg>
<div class="t" style="left:597px;top:378px;color:#ff0000;letter-spacing:-0.22px;">1:25: DeltaPos_FS5-AGC_Set</div>
<div class="a" style="left:548px;top:402px;width:11px;height:1px;background:repeating-linear-gradient(to right,#6e6e6e 0 1px,transparent 1px 2px)"></div>
<svg style="left:560px;top:395px" width="13" height="13" viewBox="0 0 13 13"><rect x="0.5" y="0.5" width="12" height="12" fill="#fff" stroke="#333"/><path d="M2.5 6.5 L5 9 L10.5 3.5" fill="none" stroke="#333" stroke-width="1.3"/></svg>
<svg style="left:576px;top:394px" width="16" height="16" viewBox="0 0 16 16"><path d="M1 8 C2.2 4,3.3 2,4.6 2 C6.8 2,8.3 13.5,11.5 13.5 C13 13.5,14.2 11,15.2 8" fill="none" stroke="#000" stroke-width="1.0"/></svg>
<div class="t" style="left:597px;top:394px;color:#ff0000;letter-spacing:-0.22px;">1:26: DeltaPos_FS6-AGC_Set</div>
<div class="a" style="left:548px;top:418px;width:11px;height:1px;background:repeating-linear-gradient(to right,#6e6e6e 0 1px,transparent 1px 2px)"></div>
<svg style="left:560px;top:411px" width="13" height="13" viewBox="0 0 13 13"><rect x="0.5" y="0.5" width="12" height="12" fill="#fff" stroke="#333"/><path d="M2.5 6.5 L5 9 L10.5 3.5" fill="none" stroke="#333" stroke-width="1.3"/></svg>
<svg style="left:576px;top:410px" width="16" height="16" viewBox="0 0 16 16"><path d="M1 8 C2.2 4,3.3 2,4.6 2 C6.8 2,8.3 13.5,11.5 13.5 C13 13.5,14.2 11,15.2 8" fill="none" stroke="#000" stroke-width="1.0"/></svg>
<div class="t" style="left:597px;top:410px;color:#ff0000;letter-spacing:-0.22px;">1:27: DeltaPos_FS7-AGC_Set</div>
<div class="a" style="left:548px;top:434px;width:11px;height:1px;background:repeating-linear-gradient(to right,#6e6e6e 0 1px,transparent 1px 2px)"></div>
<svg style="left:560px;top:427px" width="13" height="13" viewBox="0 0 13 13"><rect x="0.5" y="0.5" width="12" height="12" fill="#fff" stroke="#333"/><path d="M2.5 6.5 L5 9 L10.5 3.5" fill="none" stroke="#333" stroke-width="1.3"/></svg>
<svg style="left:576px;top:426px" width="16" height="16" viewBox="0 0 16 16"><path d="M1 8 C2.2 4,3.3 2,4.6 2 C6.8 2,8.3 13.5,11.5 13.5 C13 13.5,14.2 11,15.2 8" fill="none" stroke="#000" stroke-width="1.0"/></svg>
<div class="t" style="left:597px;top:426px;color:#ff0000;letter-spacing:-0.22px;">1:29: I_FS1_Act</div>
<div class="a" style="left:548px;top:450px;width:11px;height:1px;background:repeating-linear-gradient(to right,#6e6e6e 0 1px,transparent 1px 2px)"></div>
<svg style="left:560px;top:443px" width="13" height="13" viewBox="0 0 13 13"><rect x="0.5" y="0.5" width="12" height="12" fill="#fff" stroke="#333"/><path d="M2.5 6.5 L5 9 L10.5 3.5" fill="none" stroke="#333" stroke-width="1.3"/></svg>
<svg style="left:576px;top:442px" width="16" height="16" viewBox="0 0 16 16"><path d="M1 8 C2.2 4,3.3 2,4.6 2 C6.8 2,8.3 13.5,11.5 13.5 C13 13.5,14.2 11,15.2 8" fill="none" stroke="#000" stroke-width="1.0"/></svg>
<div class="t" style="left:597px;top:442px;color:#ff0000;letter-spacing:-0.22px;">1:30: I_FS3_Act</div>
<div class="a" style="left:548px;top:466px;width:11px;height:1px;background:repeating-linear-gradient(to right,#6e6e6e 0 1px,transparent 1px 2px)"></div>
<svg style="left:560px;top:459px" width="13" height="13" viewBox="0 0 13 13"><rect x="0.5" y="0.5" width="12" height="12" fill="#fff" stroke="#333"/><path d="M2.5 6.5 L5 9 L10.5 3.5" fill="none" stroke="#333" stroke-width="1.3"/></svg>
<svg style="left:576px;top:458px" width="16" height="16" viewBox="0 0 16 16"><path d="M3 13.4 H5.4 V1.4 H8.6 V13.4 H11.4 V1.4 H13.8" fill="none" stroke="#000" stroke-width="1.1" stroke-linejoin="round"/></svg>
<div class="t" style="left:597px;top:458px;color:#ff0000;letter-spacing:-0.22px;">1.28: MeasRollerTop_Valid</div>
<div class="a" style="left:548px;top:482px;width:11px;height:1px;background:repeating-linear-gradient(to right,#6e6e6e 0 1px,transparent 1px 2px)"></div>
<svg style="left:560px;top:475px" width="13" height="13" viewBox="0 0 13 13"><rect x="0.5" y="0.5" width="12" height="12" fill="#fff" stroke="#333"/><path d="M2.5 6.5 L5 9 L10.5 3.5" fill="none" stroke="#333" stroke-width="1.3"/></svg>
<svg style="left:576px;top:474px" width="16" height="16" viewBox="0 0 16 16"><path d="M3 13.4 H5.4 V1.4 H8.6 V13.4 H11.4 V1.4 H13.8" fill="none" stroke="#000" stroke-width="1.1" stroke-linejoin="round"/></svg>
<div class="t" style="left:597px;top:474px;color:#ff0000;letter-spacing:-0.22px;">1.29: MeasRollerBottom_Valid</div>
<div class="a" style="left:529px;top:498px;width:11px;height:1px;background:repeating-linear-gradient(to right,#6e6e6e 0 1px,transparent 1px 2px)"></div>
<svg style="left:525px;top:494px" width="9" height="9" viewBox="0 0 9 9"><rect x="0.5" y="0.5" width="8" height="8" rx="1" fill="url(#exg)" stroke="#979797"/><path d="M2 4.5H7" stroke="#2a4a9a" stroke-width="1"/><path d="M4.5 2V7" stroke="#2a4a9a" stroke-width="1"/></svg>
<svg style="left:541px;top:491px" width="13" height="13" viewBox="0 0 13 13"><rect x="0.5" y="0.5" width="12" height="12" fill="#fff" stroke="#333"/></svg>
<svg style="left:557px;top:490px" width="16" height="16" viewBox="0 0 16 16"><g stroke="#cfcfcf" stroke-width="1"><path d="M0 0.5H16M1.5 0V16M5.5 0V16M9.5 0V16M14.5 0V16M0 10.5H16"/></g><path d="M0 4.5 H3.3 L4.1 3.3 L4.9 7 L5.8 1.5 L7 4.3 L9.3 0.6 L11.3 2.6 L12.4 6.5 L15.6 3" fill="none" stroke="#ff1010" stroke-width="1.3" stroke-linejoin="round"/><path d="M0 13.5 H2.6 V8.6 H4.4 V13.5 H7.4 V8.6 H9.3 V13.5 H12 V8.6 H15.8" fill="none" stroke="#0000ff" stroke-width="1.3"/></svg>
<div class="t" style="left:578px;top:490px;color:#000;letter-spacing:-0.15px;">2. ibaLogic - Stand 1-7 / Rolling forces</div>
<div class="a" style="left:529px;top:514px;width:11px;height:1px;background:repeating-linear-gradient(to right,#6e6e6e 0 1px,transparent 1px 2px)"></div>
<svg style="left:525px;top:510px" width="9" height="9" viewBox="0 0 9 9"><rect x="0.5" y="0.5" width="8" height="8" rx="1" fill="url(#exg)" stroke="#979797"/><path d="M2 4.5H7" stroke="#2a4a9a" stroke-width="1"/><path d="M4.5 2V7" stroke="#2a4a9a" stroke-width="1"/></svg>
<svg style="left:541px;top:507px" width="13" height="13" viewBox="0 0 13 13"><rect x="0.5" y="0.5" width="12" height="12" fill="#fff" stroke="#333"/></svg>
<svg style="left:557px;top:506px" width="16" height="16" viewBox="0 0 16 16"><g stroke="#cfcfcf" stroke-width="1"><path d="M0 0.5H16M1.5 0V16M5.5 0V16M9.5 0V16M14.5 0V16M0 10.5H16"/></g><path d="M0 4.5 H3.3 L4.1 3.3 L4.9 7 L5.8 1.5 L7 4.3 L9.3 0.6 L11.3 2.6 L12.4 6.5 L15.6 3" fill="none" stroke="#ff1010" stroke-width="1.3" stroke-linejoin="round"/><path d="M0 13.5 H2.6 V8.6 H4.4 V13.5 H7.4 V8.6 H9.3 V13.5 H12 V8.6 H15.8" fill="none" stroke="#0000ff" stroke-width="1.3"/></svg>
<div class="t" style="left:578px;top:506px;color:#000;letter-spacing:-0.15px;">3. ibaLogic - IBA-Logic</div>
<div class="a" style="left:529px;top:530px;width:11px;height:1px;background:repeating-linear-gradient(to right,#6e6e6e 0 1px,transparent 1px 2px)"></div>
<svg style="left:525px;top:526px" width="9" height="9" viewBox="0 0 9 9"><rect x="0.5" y="0.5" width="8" height="8" rx="1" fill="url(#exg)" stroke="#979797"/><path d="M2 4.5H7" stroke="#2a4a9a" stroke-width="1"/><path d="M4.5 2V7" stroke="#2a4a9a" stroke-width="1"/></svg>
<svg style="left:541px;top:523px" width="13" height="13" viewBox="0 0 13 13"><rect x="0.5" y="0.5" width="12" height="12" fill="#fff" stroke="#333"/></svg>
<svg style="left:557px;top:522px" width="16" height="16" viewBox="0 0 16 16"><g stroke="#cfcfcf" stroke-width="1"><path d="M0 0.5H16M1.5 0V16M5.5 0V16M9.5 0V16M14.5 0V16M0 10.5H16"/></g><path d="M0 4.5 H3.3 L4.1 3.3 L4.9 7 L5.8 1.5 L7 4.3 L9.3 0.6 L11.3 2.6 L12.4 6.5 L15.6 3" fill="none" stroke="#ff1010" stroke-width="1.3" stroke-linejoin="round"/><path d="M0 13.5 H2.6 V8.6 H4.4 V13.5 H7.4 V8.6 H9.3 V13.5 H12 V8.6 H15.8" fill="none" stroke="#0000ff" stroke-width="1.3"/></svg>
<div class="t" style="left:578px;top:522px;color:#0000ff;letter-spacing:-0.15px;">4. ibaLogic - Shear</div>
<div class="a" style="left:529px;top:546px;width:11px;height:1px;background:repeating-linear-gradient(to right,#6e6e6e 0 1px,transparent 1px 2px)"></div>
<svg style="left:525px;top:542px" width="9" height="9" viewBox="0 0 9 9"><rect x="0.5" y="0.5" width="8" height="8" rx="1" fill="url(#exg)" stroke="#979797"/><path d="M2 4.5H7" stroke="#2a4a9a" stroke-width="1"/><path d="M4.5 2V7" stroke="#2a4a9a" stroke-width="1"/></svg>
<svg style="left:541px;top:539px" width="13" height="13" viewBox="0 0 13 13"><rect x="0.5" y="0.5" width="12" height="12" fill="#fff" stroke="#333"/></svg>
<svg style="left:557px;top:538px" width="16" height="16" viewBox="0 0 16 16"><g stroke="#cfcfcf" stroke-width="1"><path d="M0 0.5H16M1.5 0V16M5.5 0V16M9.5 0V16M14.5 0V16M0 10.5H16"/></g><path d="M0 4.5 H3.3 L4.1 3.3 L4.9 7 L5.8 1.5 L7 4.3 L9.3 0.6 L11.3 2.6 L12.4 6.5 L15.6 3" fill="none" stroke="#ff1010" stroke-width="1.3" stroke-linejoin="round"/><path d="M0 13.5 H2.6 V8.6 H4.4 V13.5 H7.4 V8.6 H9.3 V13.5 H12 V8.6 H15.8" fill="none" stroke="#0000ff" stroke-width="1.3"/></svg>
<div class="t" style="left:578px;top:538px;color:#0000ff;letter-spacing:-0.15px;">5. ibaLogic - Virtuall</div>
<div class="a" style="left:529px;top:562px;width:11px;height:1px;background:repeating-linear-gradient(to right,#6e6e6e 0 1px,transparent 1px 2px)"></div>
<svg style="left:525px;top:558px" width="9" height="9" viewBox="0 0 9 9"><rect x="0.5" y="0.5" width="8" height="8" rx="1" fill="url(#exg)" stroke="#979797"/><path d="M2 4.5H7" stroke="#2a4a9a" stroke-width="1"/><path d="M4.5 2V7" stroke="#2a4a9a" stroke-width="1"/></svg>
<svg style="left:541px;top:555px" width="13" height="13" viewBox="0 0 13 13"><rect x="0.5" y="0.5" width="12" height="12" fill="#fff" stroke="#333"/></svg>
<svg style="left:557px;top:554px" width="16" height="16" viewBox="0 0 16 16"><path d="M3.4 2.3 V9.2 H7.4 V14.3" fill="none" stroke="#000" stroke-width="1.1"/><path d="M7.6 7.2 L11.8 10.7 L7.6 14.2 Z" fill="#119a22"/></svg>
<div class="t" style="left:578px;top:554px;color:#000;letter-spacing:-0.15px;">6. Trigger module</div>
<div class="a" style="left:529px;top:578px;width:11px;height:1px;background:repeating-linear-gradient(to right,#6e6e6e 0 1px,transparent 1px 2px)"></div>
<svg style="left:525px;top:574px" width="9" height="9" viewBox="0 0 9 9"><rect x="0.5" y="0.5" width="8" height="8" rx="1" fill="url(#exg)" stroke="#979797"/><path d="M2 4.5H7" stroke="#2a4a9a" stroke-width="1"/><path d="M4.5 2V7" stroke="#2a4a9a" stroke-width="1"/></svg>
<svg style="left:541px;top:571px" width="13" height="13" viewBox="0 0 13 13"><rect x="0.5" y="0.5" width="12" height="12" fill="#fff" stroke="#333"/></svg>
<svg style="left:557px;top:570px" width="16" height="16" viewBox="0 0 16 16"><path d="M0.5 0.6 H7.5 L11 4 V14.8 H0.5 Z" fill="#d8e4f6" stroke="#7890c0" stroke-width="1"/><path d="M2 4H7M2 6H6M2 8H5M2 10H5M2 12H6" stroke="#98acd4" stroke-width="0.8"/><circle cx="10" cy="9" r="5.2" fill="#e6eef8" stroke="#8a9ab8" stroke-width="1.2"/><circle cx="10" cy="9" r="3.8" fill="#f4f8fc"/><path d="M10 9 L12.6 6.4" stroke="#333" stroke-width="1"/><circle cx="7.5" cy="6.8" r="0.6" fill="#f07030"/><circle cx="12.5" cy="11.5" r="0.6" fill="#f07030"/></svg>
<div class="t" style="left:578px;top:570px;color:#000;letter-spacing:-0.15px;">8. Dateitext</div>
<div class="a" style="left:529px;top:594px;width:11px;height:1px;background:repeating-linear-gradient(to right,#6e6e6e 0 1px,transparent 1px 2px)"></div>
<svg style="left:525px;top:590px" width="9" height="9" viewBox="0 0 9 9"><rect x="0.5" y="0.5" width="8" height="8" rx="1" fill="url(#exg)" stroke="#979797"/><path d="M2 4.5H7" stroke="#2a4a9a" stroke-width="1"/><path d="M4.5 2V7" stroke="#2a4a9a" stroke-width="1"/></svg>
<svg style="left:541px;top:587px" width="13" height="13" viewBox="0 0 13 13"><rect x="0.5" y="0.5" width="12" height="12" fill="#fff" stroke="#333"/></svg>
<svg style="left:557px;top:586px" width="16" height="16" viewBox="0 0 16 16"><g stroke="#cfcfcf" stroke-width="1"><path d="M0 0.5H16M1.5 0V16M5.5 0V16M9.5 0V16M14.5 0V16M0 10.5H16"/></g><path d="M0 4.5 H3.3 L4.1 3.3 L4.9 7 L5.8 1.5 L7 4.3 L9.3 0.6 L11.3 2.6 L12.4 6.5 L15.6 3" fill="none" stroke="#ff1010" stroke-width="1.3" stroke-linejoin="round"/><path d="M0 13.5 H2.6 V8.6 H4.4 V13.5 H7.4 V8.6 H9.3 V13.5 H12 V8.6 H15.8" fill="none" stroke="#0000ff" stroke-width="1.3"/></svg>
<div class="t" style="left:578px;top:586px;color:#0000ff;letter-spacing:-0.15px;">9. ibaLogic - OEE</div>
<div class="a" style="left:529px;top:610px;width:11px;height:1px;background:repeating-linear-gradient(to right,#6e6e6e 0 1px,transparent 1px 2px)"></div>
<svg style="left:525px;top:606px" width="9" height="9" viewBox="0 0 9 9"><rect x="0.5" y="0.5" width="8" height="8" rx="1" fill="url(#exg)" stroke="#979797"/><path d="M2 4.5H7" stroke="#2a4a9a" stroke-width="1"/><path d="M4.5 2V7" stroke="#2a4a9a" stroke-width="1"/></svg>
<svg style="left:541px;top:603px" width="13" height="13" viewBox="0 0 13 13"><rect x="0.5" y="0.5" width="12" height="12" fill="#fff" stroke="#333"/></svg>
<svg style="left:557px;top:602px" width="16" height="16" viewBox="0 0 16 16"><g stroke="#cfcfcf" stroke-width="1"><path d="M0 0.5H16M1.5 0V16M5.5 0V16M9.5 0V16M14.5 0V16M0 10.5H16"/></g><path d="M0 4.5 H3.3 L4.1 3.3 L4.9 7 L5.8 1.5 L7 4.3 L9.3 0.6 L11.3 2.6 L12.4 6.5 L15.6 3" fill="none" stroke="#ff1010" stroke-width="1.3" stroke-linejoin="round"/><path d="M0 13.5 H2.6 V8.6 H4.4 V13.5 H7.4 V8.6 H9.3 V13.5 H12 V8.6 H15.8" fill="none" stroke="#0000ff" stroke-width="1.3"/></svg>
<div class="t" style="left:578px;top:602px;color:#0000ff;letter-spacing:-0.15px;">10. ibaPDA - Virtual signals (Stand 1-7)</div>
<div class="a" style="left:529px;top:626px;width:11px;height:1px;background:repeating-linear-gradient(to right,#6e6e6e 0 1px,transparent 1px 2px)"></div>
<svg style="left:525px;top:622px" width="9" height="9" viewBox="0 0 9 9"><rect x="0.5" y="0.5" width="8" height="8" rx="1" fill="url(#exg)" stroke="#979797"/><path d="M2 4.5H7" stroke="#2a4a9a" stroke-width="1"/><path d="M4.5 2V7" stroke="#2a4a9a" stroke-width="1"/></svg>
<svg style="left:541px;top:619px" width="13" height="13" viewBox="0 0 13 13"><rect x="0.5" y="0.5" width="12" height="12" fill="#fff" stroke="#333"/></svg>
<svg style="left:557px;top:618px" width="16" height="16" viewBox="0 0 16 16"><path d="M0.5 6 H15" stroke="#333" stroke-width="2.4"/><path d="M7.5 7 V14" stroke="#333" stroke-width="2.6"/><rect x="5" y="3" width="5" height="5" fill="#f4cd50" stroke="#b89020" stroke-width="0.8"/></svg>
<div class="t" style="left:578px;top:618px;color:#000;letter-spacing:-0.15px;">11. TCP Text</div>
</div>
<div class="a" style="left:238px;top:648px;width:416px;height:1px;background:#000"></div>
<div class="a" style="left:238px;top:648px;width:1px;height:17px;background:#000"></div>
<div class="a" style="left:653px;top:648px;width:1px;height:17px;background:#000"></div>
<div class="a" style="left:239px;top:650px;width:207px;height:15px;background:linear-gradient(to right,#1a8a1a,#a8d41a)"></div>
<div class="a" style="left:445px;top:648px;width:1px;height:3px;background:#000"></div>
<div class="t" style="left:238px;top:664px;color:#000;font-size:12px;letter-spacing:0px;">0</div>
<div class="t" style="left:442px;top:664px;color:#000;font-size:12px;letter-spacing:0px;">1</div>
<div class="t" style="left:646px;top:664px;color:#000;font-size:12px;letter-spacing:0px;">2</div>
<svg style="left:670px;top:656px" width="10" height="16" viewBox="0 0 10 16"><path d="M4.7 2 H7.1 V13.8 H4.7 Z" fill="#007a00"/><path d="M1.6 4 L5.2 2.1 L5.6 3.6 L1.9 5 Z" fill="#007a00"/></svg>
<div class="a" style="left:694px;top:653px;width:73px;height:21px;background:#e1e1e1;border:2px solid #0078d7"></div>
<div class="a" style="left:775px;top:653px;width:73px;height:21px;background:#e1e1e1;border:1px solid #adadad"></div>
<div class="a" style="left:856px;top:653px;width:73px;height:21px;background:#e1e1e1;border:1px solid #adadad"></div>
<div class="t" style="left:694px;top:656px;width:73px;text-align:center">OK</div>
<div class="t" style="left:775px;top:656px;width:73px;text-align:center">Apply</div>
<div class="t" style="left:856px;top:656px;width:73px;text-align:center;letter-spacing:0.3px">Cancel</div>
</body></html>
